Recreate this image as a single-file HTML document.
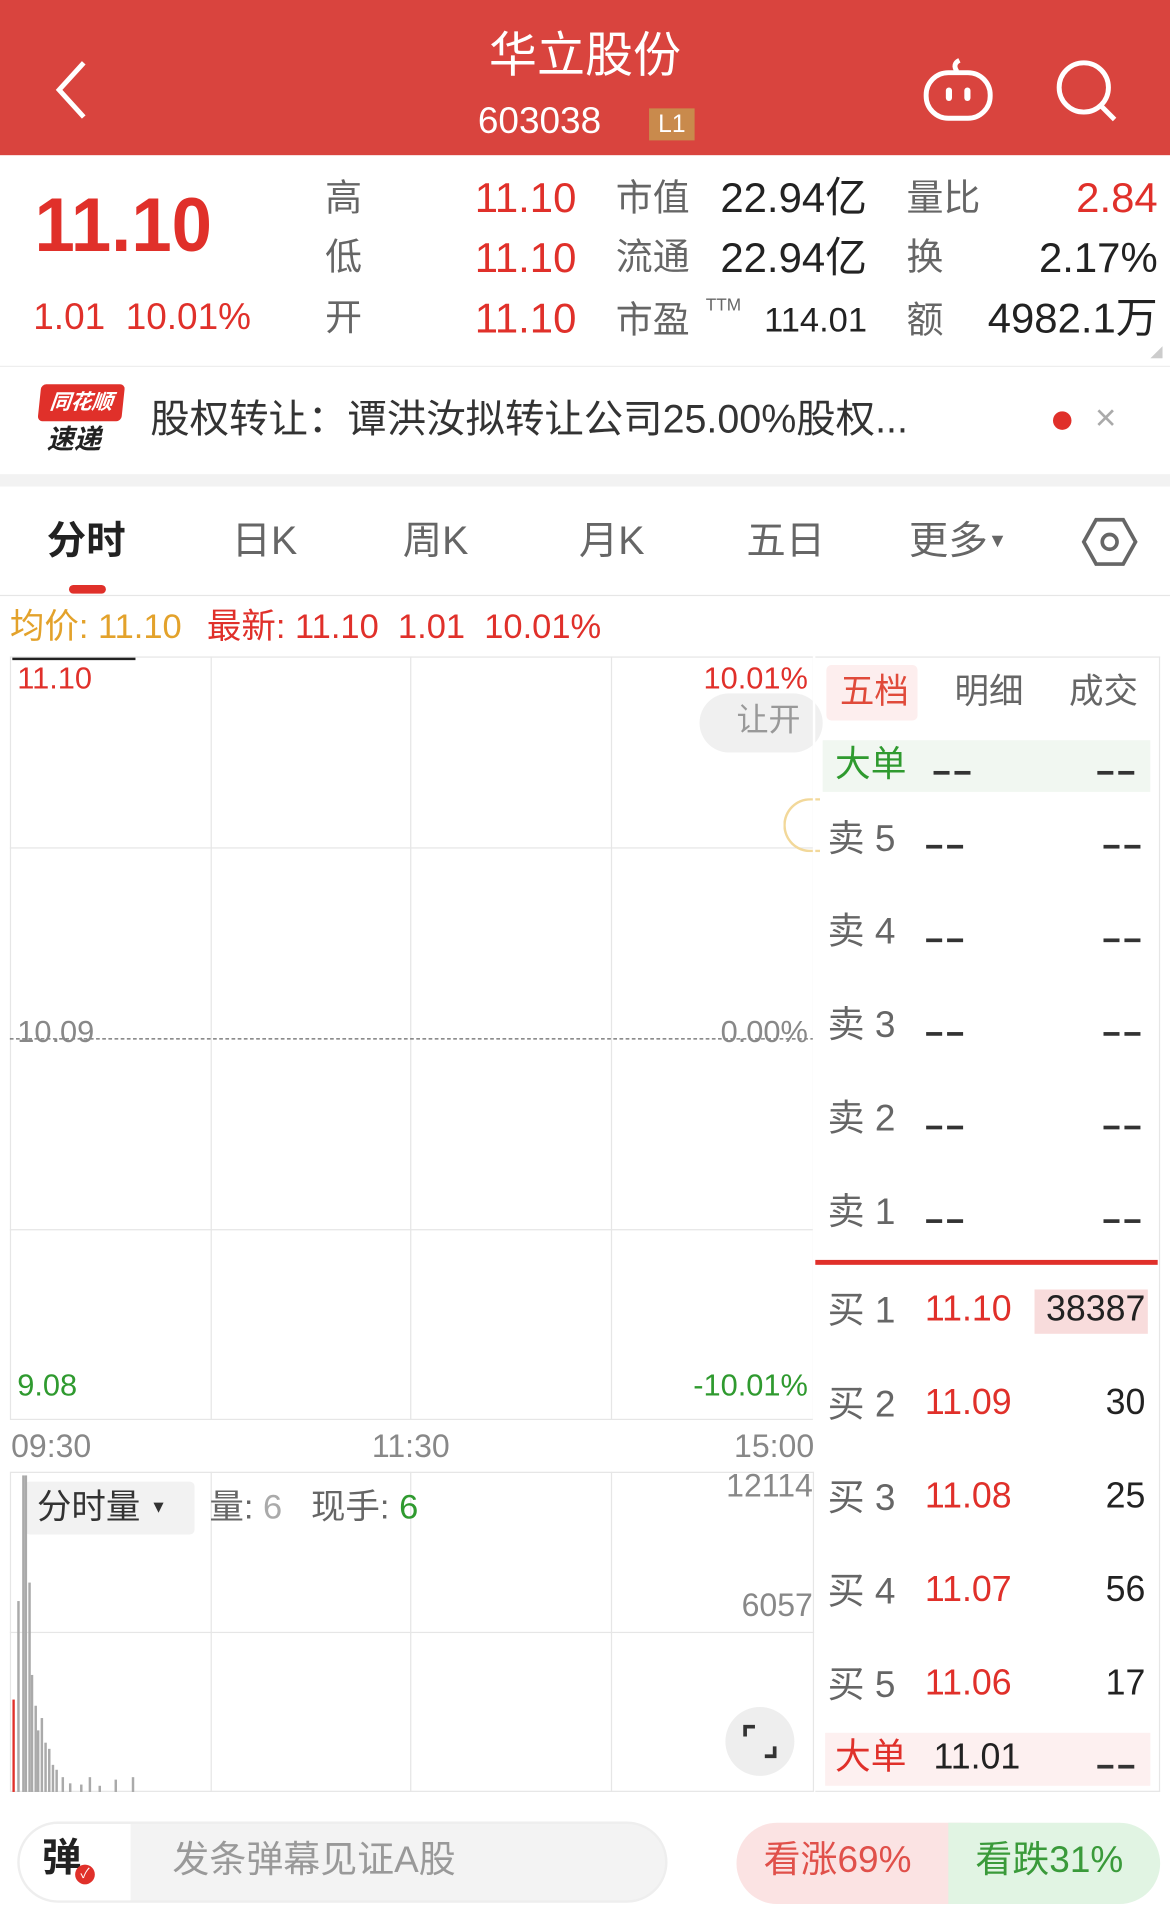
<!DOCTYPE html>
<html><head><meta charset="utf-8">
<style>
*{margin:0;padding:0;box-sizing:border-box}
html,body{width:1170px;height:1931px;overflow:hidden;background:#fff}
#w{position:absolute;left:0;top:0;width:950px;height:1568px;transform:scale(1.231579);transform-origin:0 0;font-family:"Liberation Sans","Noto Sans CJK SC",sans-serif;color:#333}
.a{position:absolute;white-space:nowrap;line-height:1}
.r{color:#e0302a}.g{color:#2f9a2f}.gr{color:#666}.k{color:#222}
.hl{position:absolute;height:1px;background:#e6e6e6}
.vl{position:absolute;width:1px;background:#e6e6e6}
.d{display:inline-block;width:13px;height:3px;background:#333;margin-right:4px;vertical-align:middle}
</style></head><body><div id="w">
<!-- header -->
<div class="a" style="left:0;top:0;width:950px;height:126px;background:#d9443e"></div>
<svg class="a" style="left:40px;top:48px" width="34" height="50"><path d="M28 3 L8 25 L28 47" stroke="#fff" stroke-width="4" fill="none"/></svg>
<div class="a" style="left:0;width:950px;text-align:center;top:26px;font-size:39px;color:#fff">华立股份</div>
<div class="a" style="left:388px;top:84px;font-size:30px;color:#fff">603038</div>
<div class="a" style="left:527px;top:88px;width:37px;height:26px;background:#c98a4c;color:#fff;font-size:20px;text-align:center;line-height:26px">L1</div>
<svg class="a" style="left:748px;top:44px" width="60" height="56"><path d="M29 14 q-4-6 2-9" stroke="#fff" stroke-width="4" fill="none"/><rect x="4" y="15" width="52" height="37" rx="18" stroke="#fff" stroke-width="4" fill="none"/><rect x="20" y="27" width="5" height="11" rx="2.5" fill="#fff"/><rect x="35" y="27" width="5" height="11" rx="2.5" fill="#fff"/></svg>
<svg class="a" style="left:855px;top:46px" width="56" height="54"><circle cx="25" cy="25" r="20" stroke="#fff" stroke-width="4" fill="none"/><path d="M39 40 L50 51" stroke="#fff" stroke-width="4"/></svg>
<!-- quote -->
<div class="a r" style="left:28px;top:153px;font-size:62px;font-weight:bold;transform:scaleX(0.95);transform-origin:0 0">11.10</div>
<div class="a r" style="left:27px;top:243px;font-size:30px">1.01&nbsp;&nbsp;10.01%</div>
<div class="a gr" style="left:264px;top:147px;font-size:30px">高</div>
<div class="a gr" style="left:264px;top:195px;font-size:30px">低</div>
<div class="a gr" style="left:264px;top:244px;font-size:30px">开</div>
<div class="a r" style="left:360px;width:108px;text-align:right;top:144px;font-size:34px">11.10</div>
<div class="a r" style="left:360px;width:108px;text-align:right;top:193px;font-size:34px">11.10</div>
<div class="a r" style="left:360px;width:108px;text-align:right;top:242px;font-size:34px">11.10</div>
<div class="a gr" style="left:500px;top:147px;font-size:30px">市值</div>
<div class="a gr" style="left:500px;top:195px;font-size:30px">流通</div>
<div class="a gr" style="left:500px;top:246px;font-size:30px">市盈</div>
<div class="a gr" style="left:573px;top:240px;font-size:14px">TTM</div>
<div class="a k" style="left:570px;width:134px;text-align:right;top:144px;font-size:34px">22.94亿</div>
<div class="a k" style="left:570px;width:134px;text-align:right;top:193px;font-size:34px">22.94亿</div>
<div class="a k" style="left:600px;width:104px;text-align:right;top:246px;font-size:28px">114.01</div>
<div class="a gr" style="left:736px;top:147px;font-size:30px">量比</div>
<div class="a gr" style="left:736px;top:195px;font-size:30px">换</div>
<div class="a gr" style="left:736px;top:246px;font-size:30px">额</div>
<div class="a r" style="left:800px;width:140px;text-align:right;top:144px;font-size:34px">2.84</div>
<div class="a k" style="left:800px;width:140px;text-align:right;top:193px;font-size:34px">2.17%</div>
<div class="a k" style="left:780px;width:160px;text-align:right;top:242px;font-size:34px">4982.1万</div>
<svg class="a" style="left:934px;top:281px" width="10" height="10"><path d="M10 0 L10 10 L0 10Z" fill="#ccc"/></svg>
<div class="hl" style="left:0;top:297px;width:950px;background:#eee"></div>
<!-- news -->
<div class="a" style="left:32px;top:312px;width:68px;height:30px;background:#e0302a;border-radius:4px;color:#fff;font-size:17px;font-style:italic;font-weight:bold;text-align:center;line-height:30px;transform:skewX(-6deg)">同花顺</div>
<div class="a k" style="left:38px;top:346px;font-size:22px;font-style:italic;font-weight:bold">速递</div>
<div class="a k" style="left:122px;top:324px;font-size:32px;color:#333">股权转让：谭洪汝拟转让公司25.00%股权...</div>
<div class="a" style="left:855px;top:334px;width:15px;height:15px;border-radius:50%;background:#e0302a"></div>
<div class="a" style="left:889px;top:325px;font-size:30px;color:#aaa">×</div>
<div class="a" style="left:0;top:385px;width:950px;height:10px;background:#f2f2f2"></div>
<!-- tabs -->
<div class="a k" style="left:38px;top:423px;font-size:32px;font-weight:bold">分时</div>
<div class="a gr" style="left:188px;top:423px;font-size:32px">日K</div>
<div class="a gr" style="left:327px;top:423px;font-size:32px">周K</div>
<div class="a gr" style="left:470px;top:423px;font-size:32px">月K</div>
<div class="a gr" style="left:606px;top:423px;font-size:32px">五日</div>
<div class="a gr" style="left:738px;top:423px;font-size:32px">更多<span style="font-size:16px;vertical-align:6px">▼</span></div>
<svg class="a" style="left:878px;top:418px" width="46" height="44"><path d="M12 4 L34 4 L44 22 L34 40 L12 40 L2 22Z" stroke="#666" stroke-width="3" fill="none"/><circle cx="23" cy="22" r="6" stroke="#666" stroke-width="3" fill="none"/></svg>
<div class="a" style="left:56px;top:475px;width:30px;height:7px;border-radius:4px;background:#e0302a"></div>
<div class="hl" style="left:0;top:483px;width:950px"></div>
<div class="a" style="left:8px;top:495px;font-size:28px;color:#e3a22b">均价: 11.10</div>
<div class="a r" style="left:168px;top:495px;font-size:28px">最新: 11.10&nbsp;&nbsp;1.01&nbsp;&nbsp;10.01%</div>
<!-- chart grid -->
<div class="a" style="left:8px;top:533px;width:653px;height:620px;border:1px solid #e6e6e6"></div>
<div class="vl" style="left:171px;top:533px;height:620px"></div>
<div class="vl" style="left:333px;top:533px;height:620px"></div>
<div class="vl" style="left:496px;top:533px;height:620px"></div>
<div class="hl" style="left:8px;top:688px;width:653px"></div>
<div class="hl" style="left:8px;top:998px;width:653px"></div>
<div class="a" style="left:8px;top:843px;width:653px;border-top:1.5px dashed #666"></div>
<div class="a" style="left:10px;top:534px;width:100px;height:2px;background:#222"></div>
<div class="a r" style="left:14px;top:539px;font-size:25px">11.10</div>
<div class="a r" style="left:540px;width:116px;text-align:right;top:539px;font-size:25px">10.01%</div>
<div class="a gr" style="left:14px;top:826px;font-size:25px;color:#888">10.09</div>
<div class="a gr" style="left:540px;width:116px;text-align:right;top:826px;font-size:25px;color:#888">0.00%</div>
<div class="a g" style="left:14px;top:1113px;font-size:25px">9.08</div>
<div class="a g" style="left:520px;width:136px;text-align:right;top:1113px;font-size:25px">-10.01%</div>
<div class="a" style="left:568px;top:563px;width:100px;height:48px;border-radius:24px;background:#f0f0f0;color:#999;font-size:26px;padding:8px 0 0 30px;overflow:hidden">让开</div>
<div class="a" style="left:636px;top:648px;width:30px;height:44px;border-radius:22px 0 0 22px;border:2px solid #f2d89a;border-right:none"></div>
<div class="a" style="left:660px;top:533px;width:2px;height:922px;background:#fff"></div>
<!-- time -->
<div class="a" style="left:9px;top:1161px;font-size:26px;color:#888">09:30</div>
<div class="a" style="left:302px;top:1161px;font-size:26px;color:#888">11:30</div>
<div class="a" style="left:596px;top:1161px;font-size:26px;color:#888">15:00</div>
<!-- volume -->
<div class="a" style="left:8px;top:1195px;width:653px;height:260px;border:1px solid #e6e6e6"></div>
<div class="vl" style="left:171px;top:1195px;height:260px"></div>
<div class="vl" style="left:333px;top:1195px;height:260px"></div>
<div class="vl" style="left:496px;top:1195px;height:260px"></div>
<div class="hl" style="left:8px;top:1325px;width:653px"></div>
<div class="a" style="left:20px;top:1203px;width:138px;height:43px;background:#f2f2f2;border-radius:4px"></div>
<div class="a k" style="left:30px;top:1210px;font-size:28px;color:#333">分时量 <span style="font-size:14px;vertical-align:5px">▼</span></div>
<div class="a gr" style="left:170px;top:1210px;font-size:28px">量: <span style="color:#aaa">6</span>&nbsp;&nbsp;&nbsp;现手: <span class="g">6</span></div>
<div class="a" style="left:560px;width:100px;text-align:right;top:1193px;font-size:26px;color:#888">12114</div>
<div class="a" style="left:560px;width:100px;text-align:right;top:1290px;font-size:26px;color:#888">6057</div>
<svg class="a" style="left:10px;top:1195px" width="110" height="260"><g fill="#aaa">
<rect x="4" y="105" width="2" height="155"/><rect x="8" y="3" width="2" height="257"/><rect x="10" y="3" width="2" height="257"/><rect x="13" y="90" width="2" height="170"/><rect x="15" y="165" width="2" height="95"/><rect x="18" y="190" width="2" height="70"/><rect x="20" y="210" width="2" height="50"/><rect x="23" y="200" width="2" height="60"/><rect x="26" y="220" width="2" height="40"/><rect x="29" y="225" width="2" height="35"/><rect x="32" y="238" width="2" height="22"/><rect x="35" y="242" width="2" height="18"/><rect x="40" y="248" width="2" height="12"/><rect x="46" y="253" width="2" height="7"/><rect x="55" y="254" width="2" height="6"/><rect x="62" y="248" width="2" height="12"/><rect x="70" y="255" width="2" height="5"/><rect x="83" y="250" width="2" height="10"/><rect x="97" y="248" width="2" height="12"/></g><rect x="0" y="185" width="2" height="75" fill="#e0302a"/></svg>
<div class="a" style="left:589px;top:1386px;width:56px;height:56px;border-radius:50%;background:#eee"></div>
<svg class="a" style="left:601px;top:1398px" width="32" height="32"><path d="M4 12 V4 H12 M28 20 V28 H20" stroke="#333" stroke-width="3" fill="none"/></svg>
<!-- right panel -->
<div class="a" style="left:662px;top:533px;width:280px;height:922px;border:1px solid #e6e6e6;border-left:none"></div>
<div class="a" style="left:671px;top:540px;width:74px;height:45px;background:#fdeeee;border-radius:4px"></div>
<div class="a r" style="left:682px;top:548px;font-size:28px;color:#e04a3a">五档</div>
<div class="a gr" style="left:775px;top:548px;font-size:28px">明细</div>
<div class="a gr" style="left:868px;top:548px;font-size:28px">成交</div>
<div class="a" style="left:668px;top:601px;width:266px;height:42px;background:#f1f7f1"></div>
<div class="a g" style="left:678px;top:607px;font-size:29px">大单</div>
<div class="a" style="left:758px;top:620px"><i class="d"></i><i class="d"></i></div>
<div class="a" style="left:891px;top:620px"><i class="d"></i><i class="d"></i></div>
<div class="a gr" style="left:672px;top:667px;font-size:30px">卖 5</div><div class="a" style="left:752px;top:680px"><i class="d"></i><i class="d"></i></div><div class="a" style="left:896px;top:680px"><i class="d"></i><i class="d"></i></div>
<div class="a gr" style="left:672px;top:742px;font-size:30px">卖 4</div><div class="a" style="left:752px;top:756px"><i class="d"></i><i class="d"></i></div><div class="a" style="left:896px;top:756px"><i class="d"></i><i class="d"></i></div>
<div class="a gr" style="left:672px;top:818px;font-size:30px">卖 3</div><div class="a" style="left:752px;top:832px"><i class="d"></i><i class="d"></i></div><div class="a" style="left:896px;top:832px"><i class="d"></i><i class="d"></i></div>
<div class="a gr" style="left:672px;top:894px;font-size:30px">卖 2</div><div class="a" style="left:752px;top:908px"><i class="d"></i><i class="d"></i></div><div class="a" style="left:896px;top:908px"><i class="d"></i><i class="d"></i></div>
<div class="a gr" style="left:672px;top:970px;font-size:30px">卖 1</div><div class="a" style="left:752px;top:984px"><i class="d"></i><i class="d"></i></div><div class="a" style="left:896px;top:984px"><i class="d"></i><i class="d"></i></div>
<div class="a" style="left:662px;top:1023px;width:278px;height:4px;background:#e0302a"></div>
<div class="a" style="left:840px;top:1047px;width:92px;height:36px;background:#f8dcdc"></div>
<div class="a gr" style="left:672px;top:1050px;font-size:30px">买 1</div><div class="a r" style="left:751px;top:1049px;font-size:29px">11.10</div><div class="a k" style="left:840px;width:90px;text-align:right;top:1049px;font-size:29px">38387</div>
<div class="a gr" style="left:672px;top:1126px;font-size:30px">买 2</div><div class="a r" style="left:751px;top:1125px;font-size:29px">11.09</div><div class="a k" style="left:840px;width:90px;text-align:right;top:1125px;font-size:29px">30</div>
<div class="a gr" style="left:672px;top:1202px;font-size:30px">买 3</div><div class="a r" style="left:751px;top:1201px;font-size:29px">11.08</div><div class="a k" style="left:840px;width:90px;text-align:right;top:1201px;font-size:29px">25</div>
<div class="a gr" style="left:672px;top:1278px;font-size:30px">买 4</div><div class="a r" style="left:751px;top:1277px;font-size:29px">11.07</div><div class="a k" style="left:840px;width:90px;text-align:right;top:1277px;font-size:29px">56</div>
<div class="a gr" style="left:672px;top:1354px;font-size:30px">买 5</div><div class="a r" style="left:751px;top:1353px;font-size:29px">11.06</div><div class="a k" style="left:840px;width:90px;text-align:right;top:1353px;font-size:29px">17</div>
<div class="a" style="left:670px;top:1407px;width:264px;height:43px;background:#fdf0f0"></div>
<div class="a r" style="left:678px;top:1413px;font-size:29px">大单</div>
<div class="a k" style="left:758px;top:1413px;font-size:29px">11.01</div>
<div class="a" style="left:891px;top:1427px"><i class="d"></i><i class="d"></i></div>
<!-- bottom -->
<div class="a" style="left:14px;top:1479px;width:528px;height:66px;border-radius:33px;background:#f3f3f3;border:2px solid #eee"></div>
<div class="a" style="left:16px;top:1481px;width:90px;height:62px;border-radius:31px 0 0 31px;background:#fff"></div>
<div class="a k" style="left:34px;top:1492px;font-size:32px;font-weight:bold">弹</div>
<div class="a" style="left:61px;top:1514px;width:16px;height:16px;border-radius:50%;background:#e0302a;color:#fff;font-size:11px;text-align:center;line-height:16px">✓</div>
<div class="a" style="left:140px;top:1496px;font-size:30px;color:#999">发条弹幕见证A股</div>
<div class="a" style="left:598px;top:1480px;width:190px;height:66px;border-radius:33px 0 0 33px;background:#fbe3e3"></div>
<div class="a" style="left:770px;top:1480px;width:172px;height:66px;border-radius:0 33px 33px 0;background:#e1f4e3"></div>
<div class="a" style="left:620px;top:1496px;font-size:30px;color:#e0504a">看涨69%</div>
<div class="a" style="left:792px;top:1496px;font-size:30px;color:#3a9a3a">看跌31%</div>
</div></body></html>
